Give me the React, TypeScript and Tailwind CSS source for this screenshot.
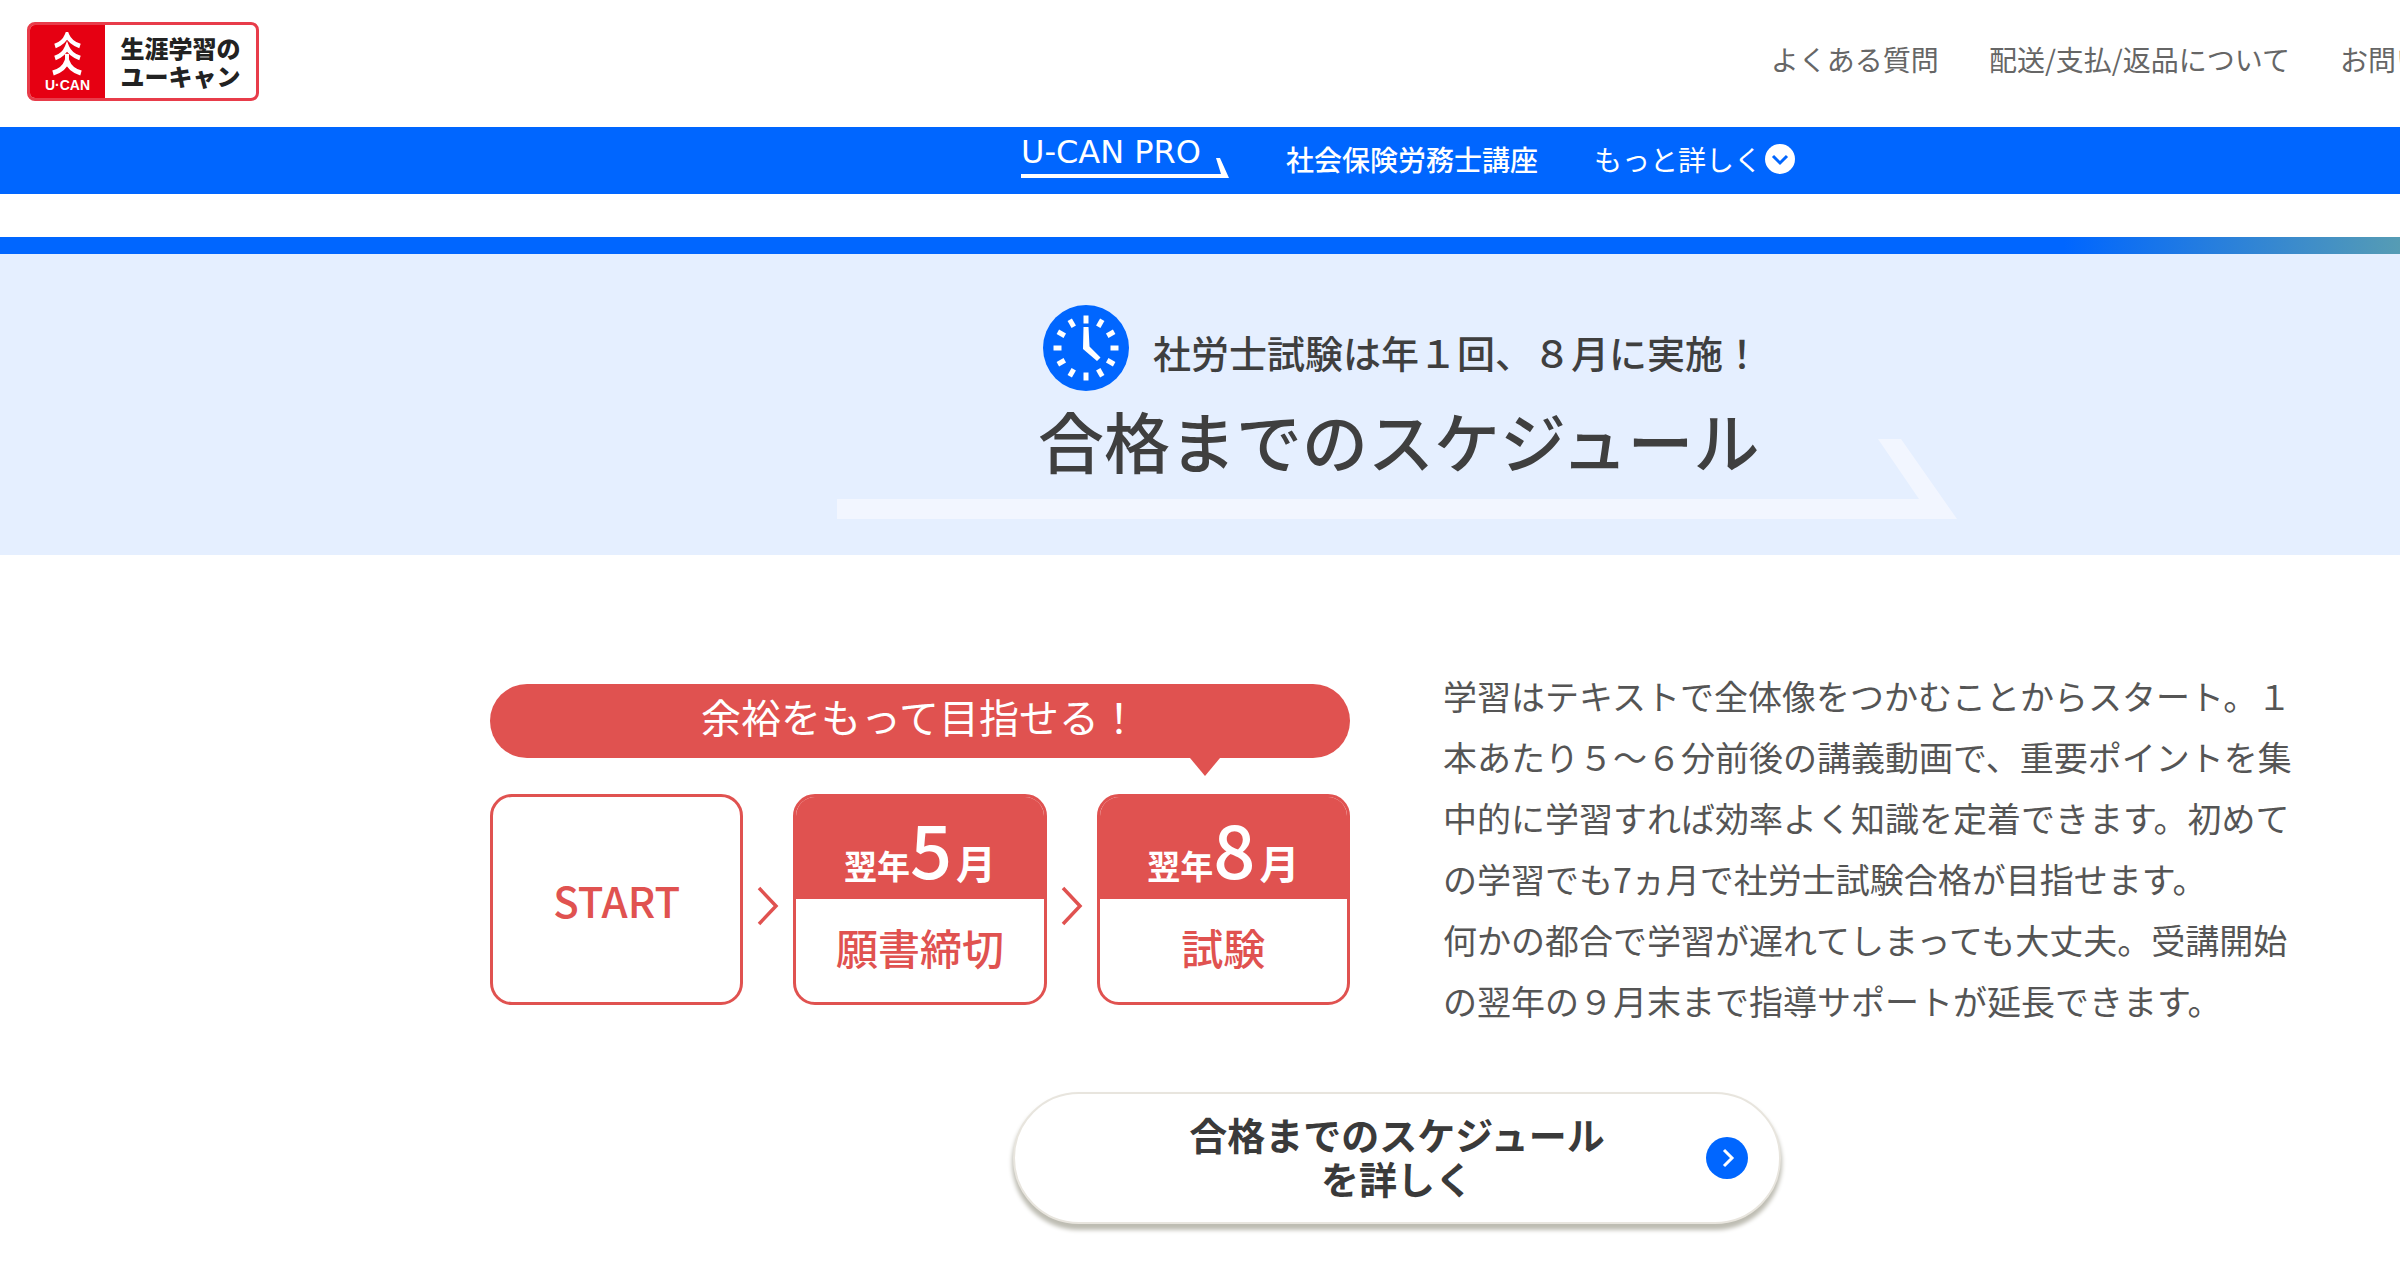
import React from "react";

const stops = Array.from({ length: 12 }, (_, i) => i * 30);

function UcanMark() {
  return (
    <svg viewBox="0 0 32 44" className="h-[44px] w-[32px]" fill="none" stroke="#fff" aria-hidden="true">
      <path d="M3 14 C9 12 13 8 15 3 C17 8 22 12 28 14" strokeWidth="4.5" />
      <path d="M3 26 C9 24 13 20 15 15 C17 20 22 24 28 26" strokeWidth="4.5" />
      <path d="M15 22 V31" strokeWidth="4" />
      <path d="M1 41 C8 39 13 35 15 29 C17 35 22 39 29 41" strokeWidth="5" />
    </svg>
  );
}

function ClockIcon() {
  return (
    <svg viewBox="0 0 86 86" className="size-[86px] shrink-0" aria-hidden="true">
      <circle cx="43" cy="43" r="43" fill="#0066ff" />
      {stops.map((a) => (
        <path key={a} d="M43 10.500v8" stroke="#fff" strokeWidth="5" transform={`rotate(${a} 43 43)`} />
      ))}
      <path d="M40.500 22h5l1 19.500 11 11-3.500 3.500-14-12z" fill="#fff" />
    </svg>
  );
}

function Chevron() {
  return (
    <svg viewBox="0 0 22 40" className="h-[40px] w-[22px] shrink-0" fill="none" stroke="#e05250" strokeWidth="3.5" aria-hidden="true">
      <path d="M2 2 19 20 2 38" />
    </svg>
  );
}

function StepCard({ month, label }: { month: string; label: string }) {
  return (
    <li className="flex h-[211px] flex-1 flex-col overflow-hidden rounded-[22px] border-3 border-[#e05250]">
      <div className="flex h-[102px] items-baseline justify-center bg-[#e05250] text-white">
        <span className="text-[33px] font-bold leading-[100px]">翌年</span>
        <span className="text-[74px] font-medium leading-[100px]">{month}</span>
        <span className="ml-1 text-[40px] font-bold leading-[100px]">月</span>
      </div>
      <p className="flex flex-1 items-center justify-center pb-[8px] text-[42px] font-medium leading-[48px] text-[#e05250]">{label}</p>
    </li>
  );
}

export default function App() {
  return (
    <div className="min-h-screen overflow-hidden bg-white font-['Noto_Sans_CJK_JP',sans-serif] text-[#3f3f3f]">
      <header className="flex h-[127px] items-start justify-between pl-[27px] pt-[22px]">
        <a href="#home" className="flex h-[79px] w-[232px] shrink-0 overflow-hidden rounded-[8px] border-3 border-[#e83c4a] bg-white">
          <span className="flex w-[75px] flex-col items-center bg-[#e60012] pt-[7px]">
            <UcanMark />
            <span className="font-['Liberation_Sans',sans-serif] text-[14px] font-bold leading-[18px] text-white">U·CAN</span>
          </span>
          <span className="flex flex-1 items-center justify-center text-[24px] font-black leading-[28px] text-[#222]">
            <span>
              生涯学習の
              <br />
              ユーキャン
            </span>
          </span>
        </a>
        <nav className="flex gap-[50px] whitespace-nowrap pt-[17px] text-[28px] leading-[40px] text-[#666]">
          <a href="#faq">よくある質問</a>
          <a href="#delivery">配送/支払/返品について</a>
          <a href="#contact" className="w-[60px] overflow-hidden">お問い合わせ</a>
        </nav>
      </header>

      <nav className="flex h-[67px] items-center justify-center bg-[#0066ff] pb-[4px] pl-[416px] text-[28px] leading-[40px] text-white">
        <a href="#pro" className="flex w-[208px] flex-col">
          <span className="whitespace-nowrap font-['DejaVu_Sans',sans-serif] text-[32px] leading-[26px]">U-CAN PRO</span>
          <svg viewBox="0 0 208 26" className="-mt-[13px] h-[26px] w-[208px]" fill="#fff" aria-hidden="true">
            <path d="M0 22h200L195 6h4l9 20H0z" />
          </svg>
        </a>
        <a href="#course" className="ml-[57px] font-medium">社会保険労務士講座</a>
        <button type="button" className="ml-[56px] flex items-center gap-[3px]">
          もっと詳しく
          <svg viewBox="0 0 30 30" className="size-[30px]" aria-hidden="true">
            <circle cx="15" cy="15" r="15" fill="#fff" />
            <path d="m8 12 7 7 7-7" fill="none" stroke="#0066ff" strokeWidth="3" />
          </svg>
        </button>
      </nav>

      <main className="pt-[43px]">
        <div className="h-[17px] bg-[linear-gradient(90deg,#0066ff_86%,#569cb4_100%)]" />
        <section className="flex h-[301px] flex-col items-center bg-[#e5efff] pl-[394px] pt-[51px]">
          <div className="flex w-[1120px] flex-col">
            <div className="flex items-center gap-[24px] pl-[206px]">
              <ClockIcon />
              <p className="whitespace-nowrap pt-[8px] text-[38px] font-medium leading-[48px]">社労士試験は年１回、８月に実施！</p>
            </div>
            <h1 className="whitespace-nowrap pl-[201px] pt-[8px] text-[66px] font-medium leading-[80px]">合格までのスケジュール</h1>
            <svg viewBox="0 0 1120 80" className="-mt-[40px] h-[80px] w-full" fill="#f2f6ff" aria-hidden="true">
              <path d="M0 60h1082L1041 0h23l56 80H0z" />
            </svg>
          </div>
        </section>

        <section className="pl-[394px] pt-[110px]">
          <div className="mx-auto flex max-w-[1814px] justify-between">
            <div className="mt-[19px] w-[860px] shrink-0">
              <div className="relative flex h-[74px] items-start justify-center rounded-full bg-[#e05250] text-[40px] leading-[64px] text-white">
                余裕をもって目指せる！
                <svg viewBox="0 0 30 18" className="absolute right-[130px] top-full h-[18px] w-[30px]" fill="#e05250" aria-hidden="true">
                  <path d="M0 0h30L15 18z" />
                </svg>
              </div>
              <ol className="mt-[36px] flex items-center gap-[14px]">
                <li className="flex h-[211px] flex-1 items-center justify-center rounded-[22px] border-3 border-[#e05250] text-[42px] font-medium leading-[48px] text-[#e05250]">START</li>
                <li className="pt-[12px]" aria-hidden="true"><Chevron /></li>
                <StepCard month="5" label="願書締切" />
                <li className="pt-[12px]" aria-hidden="true"><Chevron /></li>
                <StepCard month="8" label="試験" />
              </ol>
            </div>
            <p className="w-[861px] text-[34px] leading-[61px] text-[#555]">
              学習はテキストで全体像をつかむことからスタート。１
              <br />
              本あたり５～６分前後の講義動画で、重要ポイントを集
              <br />
              中的に学習すれば効率よく知識を定着できます。初めて
              <br />
              の学習でも7ヵ月で社労士試験合格が目指せます。
              <br />
              何かの都合で学習が遅れてしまっても大丈夫。受講開始
              <br />
              の翌年の９月末まで指導サポートが延長できます。
            </p>
          </div>
          <div className="flex justify-center pt-[61px]">
            <a
              href="#schedule"
              className="relative flex h-[132px] w-[768px] items-center justify-center rounded-full border-2 border-[#e8e5de] bg-white text-center text-[38px] font-bold leading-[44px] text-[#3a3a3a] shadow-[0_5px_4px_1px_#bebdb3]"
            >
              <span className="pb-[4px]">
                合格までのスケジュール
                <br />
                を詳しく
              </span>
              <svg viewBox="0 0 42 42" className="absolute right-[31px] size-[42px]" aria-hidden="true">
                <circle cx="21" cy="21" r="21" fill="#0066ff" />
                <path d="m18 13 8 8-8 8" fill="none" stroke="#fff" strokeWidth="3" />
              </svg>
            </a>
          </div>
        </section>
      </main>
    </div>
  );
}
